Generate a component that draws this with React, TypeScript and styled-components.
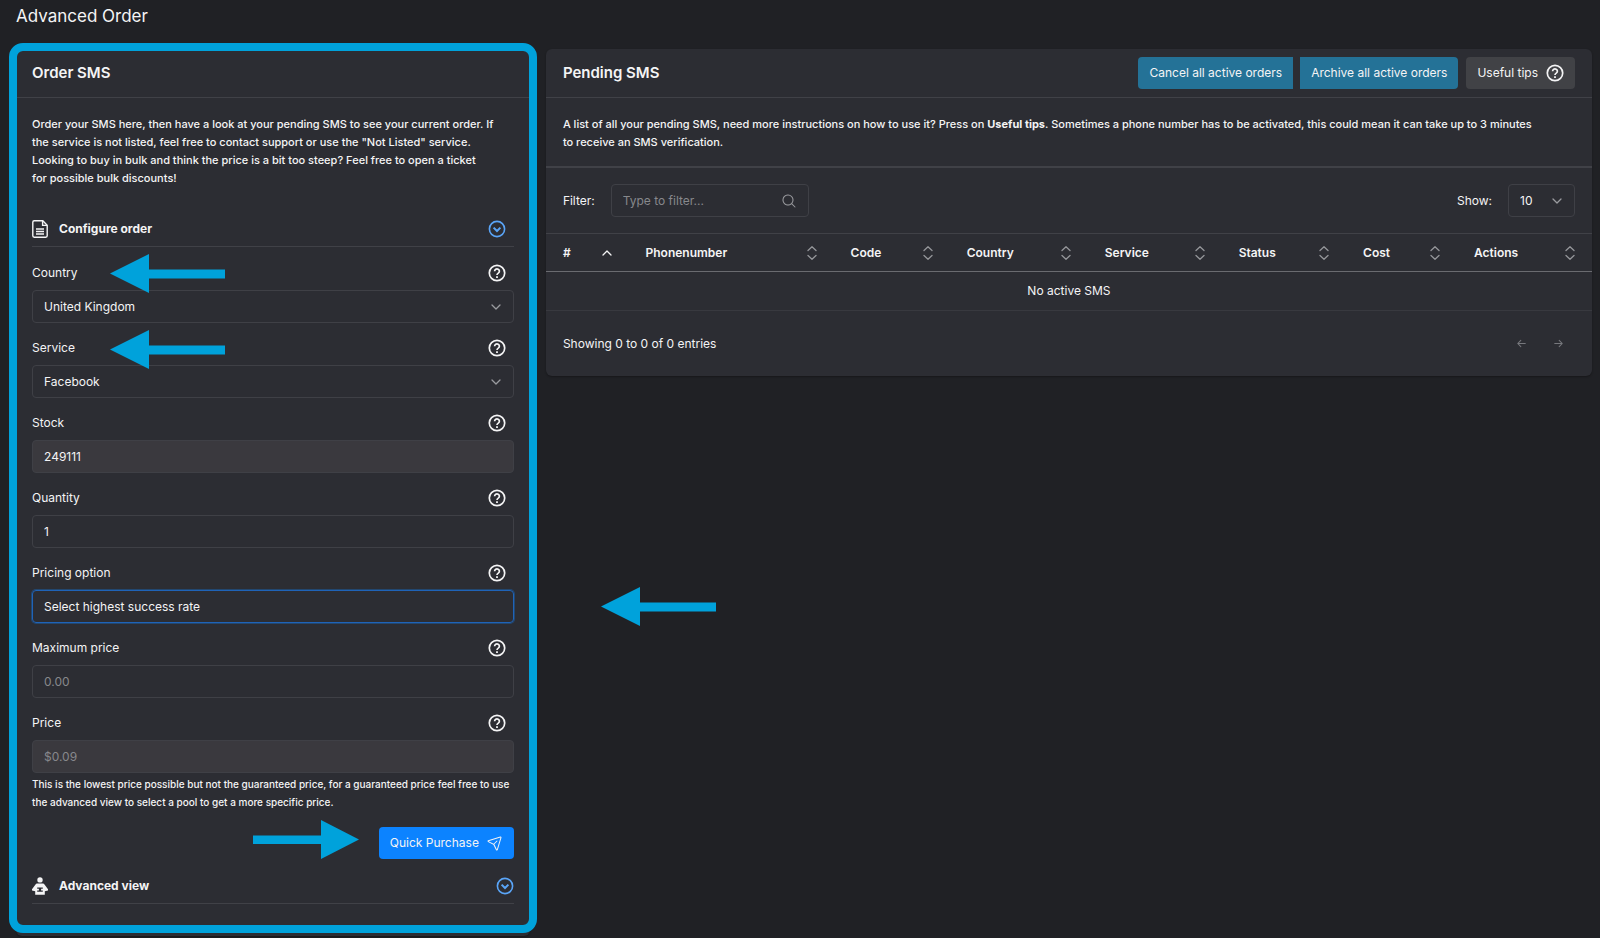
import React from 'react';
import styled, { createGlobalStyle, css } from 'styled-components';
import {
  PiArrowLeftBold,
  PiArrowRightBold,
  PiMagnifyingGlass,
  PiPaperPlaneTilt,
} from 'react-icons/pi';

const color = {
  page: '#202125',
  card: '#2c2d33',
  border: '#404147',
  field: '#3f4046',
  text: '#f4f4f5',
  muted: '#87888c',
  annotation: '#00a2db',
};

const GlobalStyle = createGlobalStyle`
  *, *::before, *::after { box-sizing: border-box; }
  body {
    margin: 0;
    background: ${color.page};
    color: ${color.text};
    font: 400 12px/18px Inter, "Liberation Sans", sans-serif;
  }
  button, input, select { font: inherit; color: inherit; }
`;

const Page = styled.main`
  display: flex;
  flex-direction: column;
  min-height: 100vh;
  padding: 0 8px 2px 16px;
`;

const PageTitle = styled.h1`
  margin: 4px 0 21px;
  font-size: 17px;
  font-weight: 400;
  line-height: 24px;
`;

const Columns = styled.div`
  display: grid;
  grid-template-columns: 28fr 57fr;
  gap: 16px;
  align-items: start;
`;

const Card = styled.section<{ $gutter: number }>`
  --gutter: ${(p) => p.$gutter}px;
  position: relative;
  min-width: 0;
  background: ${color.card};
  border-radius: 6px;
  box-shadow: 0 1px 2px rgba(0, 0, 0, 0.3);
`;

const CardHeader = styled.header`
  display: flex;
  align-items: center;
  justify-content: space-between;
  height: 49px;
  padding: 0 var(--gutter);
  border-bottom: 1px solid ${color.border};
`;

const CardTitle = styled.h2`
  margin: 0;
  font-size: 15px;
  font-weight: 600;
  line-height: 24px;
`;

const OrderBody = styled.form`
  padding: 17px var(--gutter) 32px;
`;

const Text = styled.p`
  margin: 0;
  font-size: 11px;
  font-weight: 500;
`;

const Section = styled.div<{ $gap: number; $inset?: boolean }>`
  display: flex;
  align-items: center;
  gap: 11px;
  height: 29px;
  margin-top: ${(p) => p.$gap}px;
  padding: 0 ${(p) => (p.$inset ? 8 : 0)}px 6px 0;
  border-bottom: 1px solid ${color.border};
`;

const SectionTitle = styled.h3`
  flex: 1;
  margin: 0;
  font-size: 12px;
  font-weight: 700;
  line-height: 18px;
`;

const IconButton = styled.button<{ $tone?: string }>`
  display: flex;
  padding: 0;
  border: 0;
  background: none;
  color: ${(p) => p.$tone ?? color.text};
  cursor: pointer;
`;

const Fields = styled.div`
  display: grid;
  gap: 15px;
  margin-top: 16px;
`;

const Field = styled.div`
  display: grid;
  gap: 7px;
`;

const LabelRow = styled.div`
  position: relative;
  display: flex;
  align-items: center;
  justify-content: space-between;
  height: 20px;
  padding-right: 8px;
`;

const ControlBox = styled.div`
  position: relative;
  display: grid;
  align-items: center;
`;

const control = css`
  width: 100%;
  height: 33px;
  margin: 0;
  padding: 0 11px;
  border: 1px solid ${color.field};
  border-radius: 4px;
  outline: 0;
  background: transparent;
  color: ${color.text};
`;

const Input = styled.input`
  ${control}
  &::placeholder { color: ${color.muted}; opacity: 1; }
  &:disabled { background: #3a393e; }
`;

const Select = styled.select<{ $active?: boolean }>`
  ${control}
  appearance: none;
  option { background: ${color.card}; }
  ${(p) => p.$active && css`
    border-color: #1f63b8;
    box-shadow: 0 0 0 1px rgba(12, 131, 255, 0.3);
  `}
`;

const Adornment = styled.span`
  position: absolute;
  right: 12px;
  display: flex;
  color: #9a9b9f;
  pointer-events: none;
`;

const Hint = styled.p`
  margin: 2px 0 16px;
  font-size: 10px;
  font-weight: 500;
  line-height: 18px;
`;

const SubmitRow = styled.div`
  position: relative;
  display: flex;
  justify-content: flex-end;
`;

const Button = styled.button<{ $bg: string; $corners?: string }>`
  display: flex;
  align-items: center;
  gap: 8px;
  height: 32px;
  padding: 0 11px;
  border: 0;
  border-radius: ${(p) => p.$corners ?? '4px'};
  background: ${(p) => p.$bg};
  white-space: nowrap;
  cursor: pointer;
`;

const ButtonGroup = styled.div`
  display: flex;
  gap: 7px;
`;

const Actions = styled.div`
  display: flex;
  gap: 8px;
`;

const Intro = styled.div`
  padding: 17px var(--gutter) 15px;
  border-bottom: 2px solid ${color.border};
`;

const Toolbar = styled.div`
  display: flex;
  align-items: center;
  justify-content: space-between;
  padding: 16px var(--gutter);
`;

const ToolbarItem = styled.label`
  display: flex;
  align-items: center;
  gap: 16px;
`;

const ToolbarControl = styled(ControlBox)<{ $width: number }>`
  width: ${(p) => p.$width}px;
`;

const Table = styled.table`
  width: 100%;
  border-collapse: collapse;
  table-layout: fixed;
  border-top: 1px solid ${color.border};
`;

const HeadCell = styled.th<{ $share: number }>`
  width: ${(p) => p.$share}%;
  height: 38px;
  padding: 0 var(--gutter);
  border-bottom: 1px solid #6a6b70;
  font-weight: 600;
  text-align: left;
`;

const SortButton = styled.button`
  display: flex;
  align-items: center;
  justify-content: space-between;
  width: 100%;
  padding: 0;
  border: 0;
  background: none;
  cursor: pointer;
`;

const EmptyCell = styled.td`
  height: 39px;
  padding: 0;
  border-bottom: 1px solid #38393f;
  text-align: center;
`;

const CardFooter = styled.footer`
  display: flex;
  align-items: center;
  justify-content: space-between;
  height: 65px;
  padding: 0 var(--gutter);
`;

const Pager = styled.nav`
  display: flex;
  gap: 3px;
`;

const PageButton = styled(IconButton)`
  justify-content: center;
  width: 34px;
`;

const Frame = styled.div`
  position: absolute;
  inset: -6px -7px 3px;
  border: 8px solid ${color.annotation};
  border-radius: 14px;
  pointer-events: none;
`;

const ArrowMark = styled.svg<{ $left: string; $top: number }>`
  position: absolute;
  left: ${(p) => p.$left};
  top: ${(p) => p.$top}px;
  z-index: 1;
  fill: ${color.annotation};
  pointer-events: none;
`;

const LeftArrow = ({ left, top }: { left: string; top: number }) => (
  <ArrowMark $left={left} $top={top} width="115" height="39" viewBox="0 0 115 39" aria-hidden="true">
    <path d="M0 19.5 39 0v15.5h76v9H39V39Z" />
  </ArrowMark>
);

const RightArrow = ({ left, top }: { left: string; top: number }) => (
  <ArrowMark $left={left} $top={top} width="106" height="39" viewBox="0 0 106 39" aria-hidden="true">
    <path d="M106 19.5 68 0v15.5H0v8.5h68v15Z" />
  </ArrowMark>
);

const HelpIcon = () => (
  <svg width="18" height="18" viewBox="0 0 18 18" fill="none" stroke="currentColor" strokeWidth="1.7" aria-hidden="true">
    <circle cx="9" cy="9" r="7.7" />
    <path d="M6.6 7.2a2.4 2.3 0 1 1 3.7 1.9C9.4 9.7 9 10 9 11" />
    <path d="M9 12.2v1.7" strokeWidth="1.8" />
  </svg>
);

const ToggleIcon = () => (
  <svg width="18" height="18" viewBox="0 0 18 18" fill="none" stroke="currentColor" strokeWidth="1.6" aria-hidden="true">
    <circle cx="9" cy="9" r="7.6" />
    <path d="M5.6 7.6 9 11l3.4-3.4" strokeWidth="2" />
  </svg>
);

const DocumentIcon = () => (
  <svg width="16" height="18" viewBox="0 0 16 18" fill="none" stroke="currentColor" strokeWidth="1.4" aria-hidden="true">
    <path d="M2.2.8h8.6l4.4 4.4v10.6a1.4 1.4 0 0 1-1.4 1.4H2.2A1.4 1.4 0 0 1 .8 15.8V2.2A1.4 1.4 0 0 1 2.2.8Z" />
    <path d="M10.6 1v4.4H15M4 9h8M4 11.5h8M4 14h8" />
  </svg>
);

const ReaderIcon = () => (
  <svg width="16" height="18" viewBox="0 0 16 18" fill="currentColor" aria-hidden="true">
    <circle cx="8" cy="2.9" r="2.7" />
    <path
      fillRule="evenodd"
      d="M5.5 6.6h5c1 0 1.6.4 2.2 1.200L16 12.200v1.300l-3.200.7v3.500H3.200v-3.500L0 13.500v-1.300l3.300-4.400c.6-.8 1.200-1.200 2.200-1.200ZM5.200 10.400v1.400h1.700v1.600H5.200v1.400h5.600v-1.400H9.100v-1.600h1.700v-1.400Z"
    />
  </svg>
);

const CaretIcon = () => (
  <svg width="12" height="12" viewBox="0 0 12 12" fill="none" stroke="currentColor" strokeWidth="1.3" strokeLinecap="round" strokeLinejoin="round" aria-hidden="true">
    <path d="M2 4l4 4 4-4" />
  </svg>
);

const SortIcon = ({ sorted }: { sorted: boolean }) => (
  <svg
    width="10"
    height="14"
    viewBox="0 0 10 14"
    fill="none"
    stroke={sorted ? color.text : '#95969a'}
    strokeWidth="1.3"
    strokeLinecap="round"
    strokeLinejoin="round"
    aria-hidden="true"
  >
    <path d={sorted ? 'M1 9l4-4 4 4' : 'M1 4.5 5 .8l4 3.7M1 9.5l4 3.7 4-3.7'} />
  </svg>
);

type FieldRowProps = {
  id: string;
  label: string;
  children: React.ReactNode;
  mark?: React.ReactNode;
};

const FieldRow = ({ id, label, children, mark }: FieldRowProps) => (
  <Field>
    <LabelRow>
      <label htmlFor={id}>{label}</label>
      {mark}
      <IconButton type="button" aria-label={`Help: ${label}`}>
        <HelpIcon />
      </IconButton>
    </LabelRow>
    <ControlBox>{children}</ControlBox>
  </Field>
);

const OrderCard = () => (
  <Card $gutter={16}>
    <CardHeader>
      <CardTitle>Order SMS</CardTitle>
    </CardHeader>
    <OrderBody onSubmit={(e) => e.preventDefault()}>
      <Text>
        Order your SMS here, then have a look at your pending SMS to see your current order. If
        <br />
        the service is not listed, feel free to contact support or use the "Not Listed" service.
        <br />
        Looking to buy in bulk and think the price is a bit too steep? Feel free to open a ticket
        <br />
        for possible bulk discounts!
      </Text>

      <Section $gap={31} $inset>
        <DocumentIcon />
        <SectionTitle>Configure order</SectionTitle>
        <IconButton type="button" $tone="#5aa5f8" aria-label="Toggle configure order">
          <ToggleIcon />
        </IconButton>
      </Section>

      <Fields>
        <FieldRow id="country" label="Country" mark={<LeftArrow left="78px" top={-9} />}>
          <Select id="country" defaultValue="United Kingdom">
            <option>United Kingdom</option>
          </Select>
          <Adornment><CaretIcon /></Adornment>
        </FieldRow>
        <FieldRow id="service" label="Service" mark={<LeftArrow left="78px" top={-8} />}>
          <Select id="service" defaultValue="Facebook">
            <option>Facebook</option>
          </Select>
          <Adornment><CaretIcon /></Adornment>
        </FieldRow>
        <FieldRow id="stock" label="Stock">
          <Input id="stock" defaultValue="249111" disabled />
        </FieldRow>
        <FieldRow id="quantity" label="Quantity">
          <Input id="quantity" defaultValue="1" />
        </FieldRow>
        <FieldRow id="pricing" label="Pricing option">
          <Select id="pricing" defaultValue="Select highest success rate" $active>
            <option>Select highest success rate</option>
          </Select>
          <LeftArrow left="calc(100% + 87px)" top={-3} />
        </FieldRow>
        <FieldRow id="max-price" label="Maximum price">
          <Input id="max-price" placeholder="0.00" />
        </FieldRow>
        <FieldRow id="price" label="Price">
          <Input id="price" placeholder="$0.09" disabled />
        </FieldRow>
      </Fields>
      <Hint>
        This is the lowest price possible but not the guaranteed price, for a guaranteed price feel free to use
        <br />
        the advanced view to select a pool to get a more specific price.
      </Hint>

      <SubmitRow>
        <RightArrow left="221px" top={-7} />
        <Button type="submit" $bg="#0c83ff">
          Quick Purchase
          <PiPaperPlaneTilt size={16} />
        </Button>
      </SubmitRow>

      <Section $gap={16}>
        <ReaderIcon />
        <SectionTitle>Advanced view</SectionTitle>
        <IconButton type="button" $tone="#5aa5f8" aria-label="Toggle advanced view">
          <ToggleIcon />
        </IconButton>
      </Section>
    </OrderBody>
    <Frame />
  </Card>
);

const tableColumns = [
  { name: '#', share: 7.9 },
  { name: 'Phonenumber', share: 19.6 },
  { name: 'Code', share: 11.1 },
  { name: 'Country', share: 13.2 },
  { name: 'Service', share: 12.8 },
  { name: 'Status', share: 11.9 },
  { name: 'Cost', share: 10.6 },
  { name: 'Actions', share: 12.9 },
];

const PendingCard = () => (
  <Card $gutter={17}>
    <CardHeader>
      <CardTitle>Pending SMS</CardTitle>
      <Actions>
        <ButtonGroup>
          <Button type="button" $bg="#247297" $corners="4px 0 0 4px">Cancel all active orders</Button>
          <Button type="button" $bg="#247297" $corners="0 4px 4px 0">Archive all active orders</Button>
        </ButtonGroup>
        <Button type="button" $bg="#414246">
          Useful tips
          <HelpIcon />
        </Button>
      </Actions>
    </CardHeader>
    <Intro>
      <Text>
        A list of all your pending SMS, need more instructions on how to use it? Press on <b>Useful tips</b>.
        Sometimes a phone number has to be activated, this could mean it can take up to 3 minutes
        <br />
        to receive an SMS verification.
      </Text>
    </Intro>
    <Toolbar>
      <ToolbarItem>
        Filter:
        <ToolbarControl $width={198}>
          <Input type="search" placeholder="Type to filter..." />
          <Adornment><PiMagnifyingGlass size={16} /></Adornment>
        </ToolbarControl>
      </ToolbarItem>
      <ToolbarItem>
        Show:
        <ToolbarControl $width={67}>
          <Select defaultValue="10">
            <option>10</option>
          </Select>
          <Adornment><CaretIcon /></Adornment>
        </ToolbarControl>
      </ToolbarItem>
    </Toolbar>
    <Table>
      <thead>
        <tr>
          {tableColumns.map((c, i) => (
            <HeadCell key={c.name} $share={c.share} scope="col">
              <SortButton type="button">
                {c.name}
                <SortIcon sorted={i === 0} />
              </SortButton>
            </HeadCell>
          ))}
        </tr>
      </thead>
      <tbody>
        <tr>
          <EmptyCell colSpan={tableColumns.length}>No active SMS</EmptyCell>
        </tr>
      </tbody>
    </Table>
    <CardFooter>
      <span>Showing 0 to 0 of 0 entries</span>
      <Pager aria-label="Pagination">
        <PageButton type="button" $tone="#77787d" aria-label="Previous page"><PiArrowLeftBold size={11} /></PageButton>
        <PageButton type="button" $tone="#77787d" aria-label="Next page"><PiArrowRightBold size={11} /></PageButton>
      </Pager>
    </CardFooter>
  </Card>
);

export default function App() {
  return (
    <>
      <GlobalStyle />
      <Page>
        <PageTitle>Advanced Order</PageTitle>
        <Columns>
          <OrderCard />
          <PendingCard />
        </Columns>
      </Page>
    </>
  );
}
